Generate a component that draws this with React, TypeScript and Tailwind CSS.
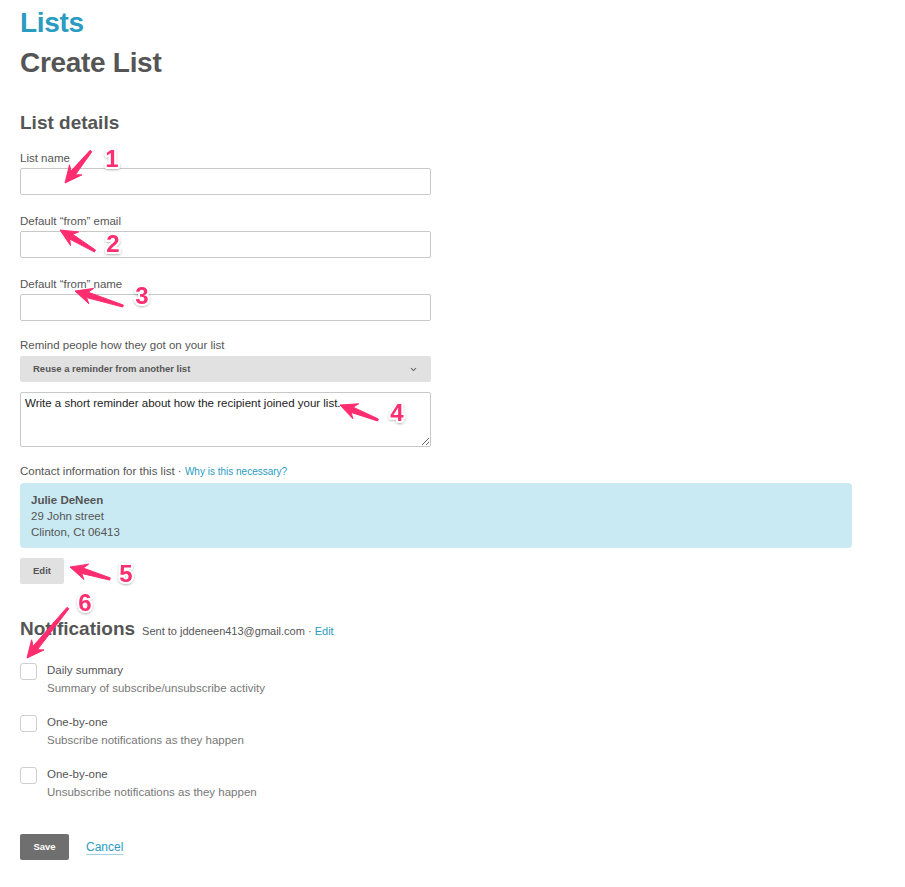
import React from 'react';

const PINK = '#ff2d6f';

type ArrowProps = { x1: number; y1: number; x2: number; y2: number };

// Skitch-style tapered arrow, tail (x1,y1) -> tip (x2,y2)
const Arrow: React.FC<ArrowProps> = ({ x1, y1, x2, y2 }) => {
  const dx = x2 - x1;
  const dy = y2 - y1;
  const len = Math.hypot(dx, dy);
  const ux = dx / len;
  const uy = dy / len;
  const nx = -uy;
  const ny = ux;
  const at = (d: number, w: number) => `${(x1 + ux * d + nx * w).toFixed(1)},${(y1 + uy * d + ny * w).toFixed(1)}`;
  const head = 16;
  const pts = [
    at(0, 1.1),
    at(len - head + 3, 2.8),
    at(len - head - 1, 8),
    at(len, 0),
    at(len - head - 1, -8),
    at(len - head + 3, -2.8),
    at(0, -1.1),
  ].join(' ');
  return <polygon points={pts} fill={PINK} stroke={PINK} strokeWidth={1} strokeLinejoin="round" />;
};

const Num: React.FC<{ x: number; y: number; n: string }> = ({ x, y, n }) => (
  <text
    x={x}
    y={y + 8.5}
    textAnchor="middle"
    fontSize={24}
    fontWeight={700}
    fontFamily="'Liberation Sans', Arial, sans-serif"
    fill={PINK}
    stroke="#fff"
    strokeWidth={4}
    strokeLinejoin="round"
    paintOrder="stroke"
    filter="url(#numShadow)"
  >
    {n}
  </text>
);

const Field: React.FC<{ label: string; first?: boolean }> = ({ label, first }) => (
  <div className={first ? 'mt-[15px]' : 'mt-[18px]'}>
    <label className="block text-[11.5px] leading-4 text-[#555]">{label}</label>
    <input className="mt-[2px] block h-[27px] w-[411px] rounded-[2px] border border-[#c8c8c8] bg-white px-[5px] text-[12px] outline-none" />
  </div>
);

const Check: React.FC<{ title: string; desc: string; first?: boolean }> = ({ title, desc, first }) => (
  <div className={`flex ${first ? 'mt-[20px]' : 'mt-[16px]'}`}>
    <div className="mt-[2px] h-[17px] w-[17px] shrink-0 rounded-[3px] border border-[#cfcfcf] bg-white" />
    <div className="ml-[10px] text-[11.5px] leading-[18px]">
      <div className="text-[#555]">{title}</div>
      <div className="text-[#777]">{desc}</div>
    </div>
  </div>
);

export default function App() {
  return (
    <div className="relative min-h-[887px] bg-white px-5 font-['Liberation_Sans',Arial,sans-serif] text-[#555]">
      <div className="w-[832px]">
        <h1 className="pt-[7px] text-[28px] font-bold leading-8 tracking-[-0.3px] text-[#2a9bc1]">Lists</h1>
        <h2 className="mt-2 text-[28px] font-bold leading-8 tracking-[-0.3px] text-[#555]">Create List</h2>

        <h3 className="mt-[32px] text-[19px] font-bold leading-6 text-[#555]">List details</h3>

        <Field label="List name" first />
        <Field label="Default “from” email" />
        <Field label="Default “from” name" />

        <div className="mt-[16px]">
          <label className="block text-[11.5px] leading-4 text-[#555]">Remind people how they got on your list</label>
          <div className="mt-[3px] flex h-[26px] w-[411px] items-center justify-between rounded-[2px] bg-[#e1e1e1] pl-[13px] pr-[14px]">
            <span className="text-[9.5px] font-bold text-[#555]">Reuse a reminder from another list</span>
            <svg width="7" height="5" viewBox="0 0 7 5">
              <path d="M1 1.2 L3.5 3.6 L6 1.2" fill="none" stroke="#666" strokeWidth="1.1" />
            </svg>
          </div>
          <textarea
            defaultValue="Write a short reminder about how the recipient joined your list."
            className="mt-[10px] block h-[55px] w-[411px] resize rounded-[2px] border border-[#c8c8c8] bg-white px-[4px] pt-[3px] text-[11.5px] leading-[15px] text-[#222] outline-none"
          />
        </div>

        <div className="mt-[16px]">
          <div className="text-[11.5px] leading-4 text-[#555]">
            Contact information for this list · <span className="text-[10px] text-[#2a9bc1]">Why is this necessary?</span>
          </div>
          <div className="mt-[3px] rounded-[4px] bg-[#c9eaf3] pb-[8px] pl-[11px] pt-[9px] text-[11.5px] leading-4 text-[#555]">
            <div className="font-bold">Julie DeNeen</div>
            <div>29 John street</div>
            <div>Clinton, Ct 06413</div>
          </div>
          <button className="mt-[10px] flex h-[26px] w-[44px] items-center justify-center rounded-[2px] bg-[#e1e1e1] text-[9.5px] font-bold text-[#555]">
            Edit
          </button>
        </div>

        <div className="mt-[33px] flex items-baseline">
          <h3 className="text-[19px] font-bold leading-6 text-[#555]">Notifications</h3>
          <span className="ml-[7px] text-[11px] text-[#555]">
            Sent to jddeneen413@gmail.com · <span className="text-[#2a9bc1]">Edit</span>
          </span>
        </div>

        <Check first title="Daily summary" desc="Summary of subscribe/unsubscribe activity" />
        <Check title="One-by-one" desc="Subscribe notifications as they happen" />
        <Check title="One-by-one" desc="Unsubscribe notifications as they happen" />

        <div className="mt-[33px] flex items-center pb-[26px]">
          <button className="flex h-[26px] w-[49px] items-center justify-center rounded-[2px] bg-[#6f6f6f] text-[9.5px] font-bold text-white">
            Save
          </button>
          <a className="ml-[17px] text-[12px] text-[#2a9bc1] underline decoration-[#9fd3e4] underline-offset-[3px]">Cancel</a>
        </div>
      </div>

      {/* annotation layer */}
      <svg className="pointer-events-none absolute left-0 top-0" width="905" height="887">
        <defs>
          <filter id="numShadow" x="-50%" y="-50%" width="200%" height="200%">
            <feDropShadow dx="0" dy="1" stdDeviation="1" floodColor="#000" floodOpacity="0.3" />
          </filter>
        </defs>
        <Arrow x1={91} y1={151} x2={65} y2={183} />
        <Arrow x1={95} y1={251} x2={60} y2={230} />
        <Arrow x1={123} y1={306} x2={75} y2={291} />
        <Arrow x1={378} y1={420} x2={340} y2={405} />
        <Arrow x1={110} y1={579} x2={70} y2={567} />
        <Arrow x1={68} y1={608} x2={27} y2={658} />
        <Num x={112} y={158} n="1" />
        <Num x={113} y={243} n="2" />
        <Num x={142} y={295} n="3" />
        <Num x={397} y={412} n="4" />
        <Num x={126} y={573} n="5" />
        <Num x={85} y={602} n="6" />
      </svg>
    </div>
  );
}
